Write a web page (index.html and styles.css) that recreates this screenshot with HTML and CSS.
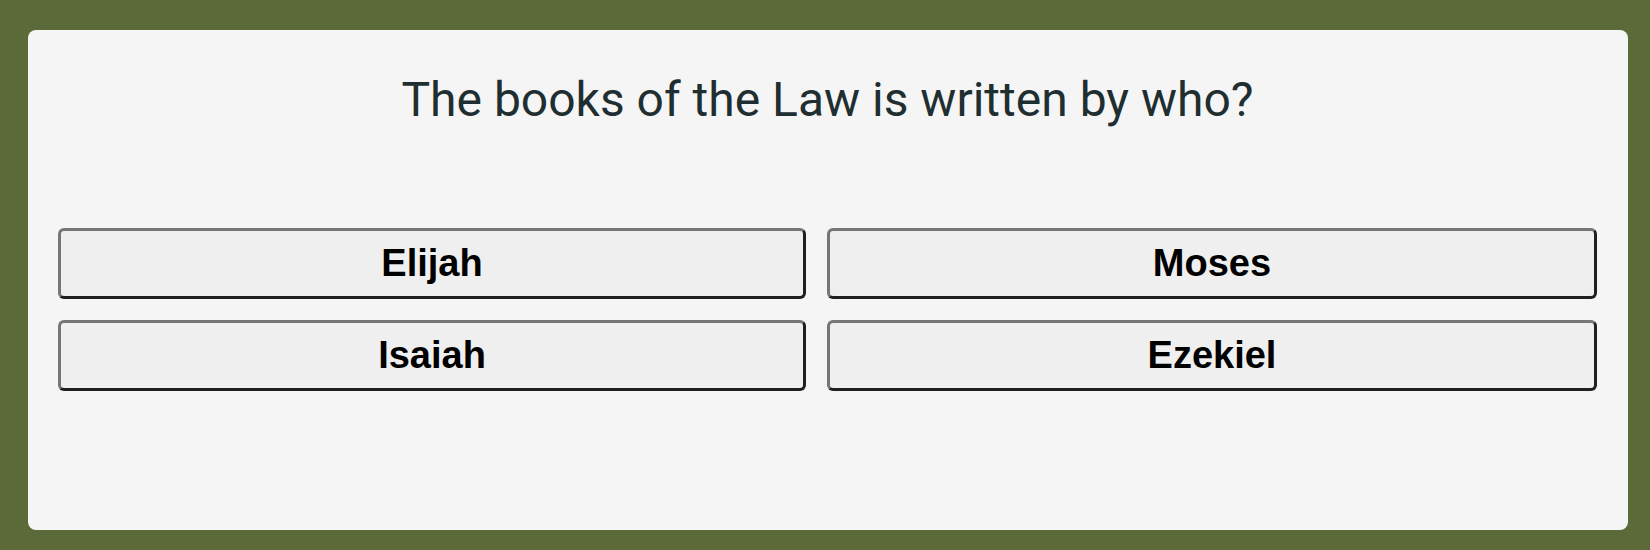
FILE: index.html
```html
<!DOCTYPE html>
<html>
<head>
<meta charset="utf-8">
<link rel="stylesheet" href="styles.css">
</head>
<body>
<div class="card">
  <h1 class="question">The books of the Law is written by who?</h1>
  <div class="answers">
    <button class="answer">Elijah</button>
    <button class="answer">Moses</button>
    <button class="answer">Isaiah</button>
    <button class="answer">Ezekiel</button>
  </div>
</div>
</body>
</html>
```

FILE: styles.css
```css
html, body {
  margin: 0;
  padding: 0;
  background: #5b6a38;
  height: 100%;
}
body {
  padding: 30px 22px 20px 28px;
  box-sizing: border-box;
}
.card {
  background: #f5f5f5;
  border-radius: 8px;
  height: 500px;
  box-sizing: border-box;
  padding: 0 31px 0 30px;
  overflow: hidden;
}
.question {
  margin: 0;
  padding-top: 42px;
  font-family: Roboto, sans-serif;
  font-weight: 400;
  font-size: 48px;
  line-height: 56px;
  color: #1f2e30;
  text-align: center;
}
.answers {
  margin-top: 100px;
  display: grid;
  grid-template-columns: 748fr 770fr;
  gap: 21px;
}
.answer {
  height: 71px;
  box-sizing: border-box;
  background: #efefef;
  border: 3px solid;
  border-color: #767676 #1f1f1f #1f1f1f #767676;
  border-radius: 6px;
  font-family: "Liberation Sans", Arial, sans-serif;
  font-weight: 700;
  font-size: 38px;
  color: #000;
  padding: 0 10px;
}
```
